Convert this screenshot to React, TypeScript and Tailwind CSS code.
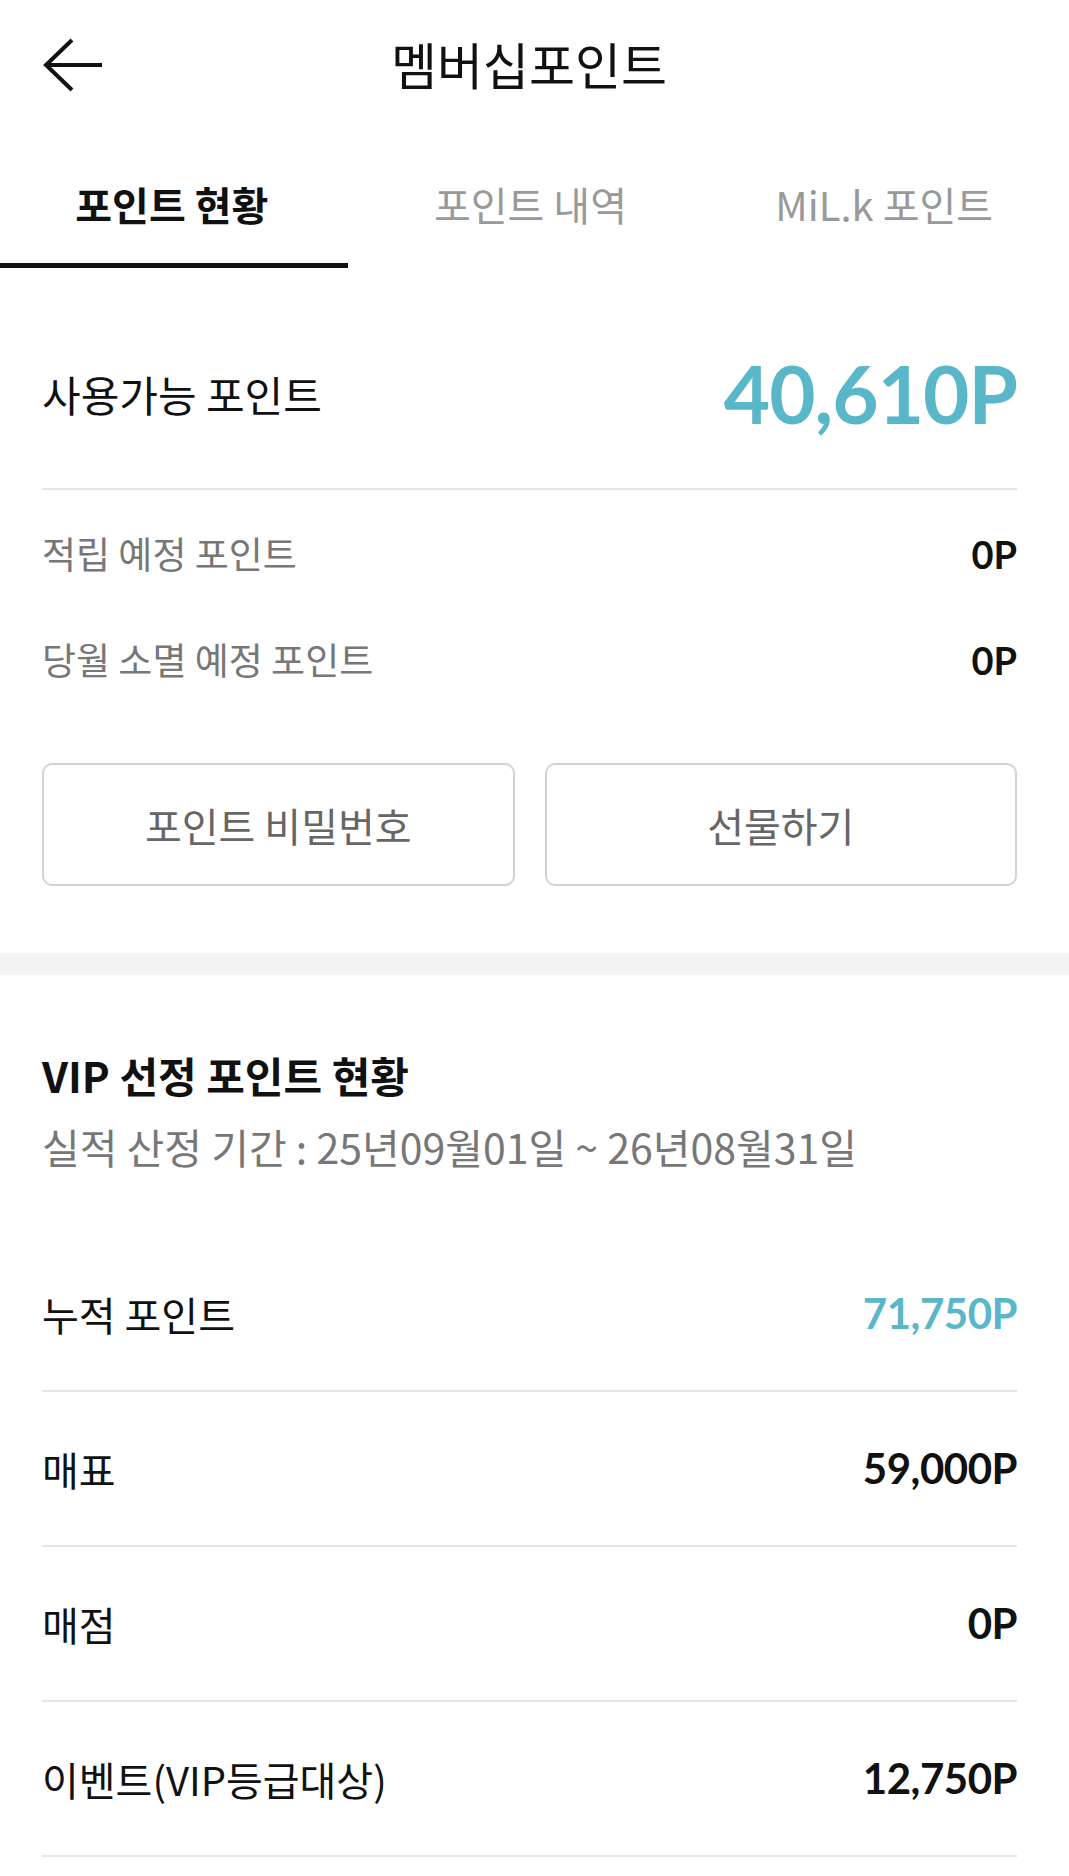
import React from "react";

const kr = "font-['Noto_Sans_CJK_KR','Noto_Sans',sans-serif]";
const num = "font-['Lato','Noto_Sans_CJK_KR',sans-serif]";

function BackArrow() {
  return (
    <svg width="62" height="56" viewBox="0 0 62 56" fill="none">
      <path
        d="M60 28H4M30 3L4 28L30 53"
        stroke="#111"
        strokeWidth="4"
        strokeLinecap="butt"
        strokeLinejoin="miter"
      />
    </svg>
  );
}

const tabs = ["포인트 현황", "포인트 내역", "MiL.k 포인트"];

const vipRows = [
  { label: "누적 포인트", value: "71,750P", accent: true },
  { label: "매표", value: "59,000P" },
  { label: "매점", value: "0P" },
  { label: "이벤트(VIP등급대상)", value: "12,750P" },
];

export default function App() {
  return (
    <div className={`min-h-screen w-[1069px] bg-white text-[#111] ${kr}`}>
      {/* header */}
      <header className="grid h-[126px] grid-cols-[1fr_auto_1fr] items-center pr-[11px]">
        <div className="pl-[42px] pt-[4px]">
          <BackArrow />
        </div>
        <h1 className="text-[50px] leading-none text-[#111]">멤버십포인트</h1>
        <div />
      </header>

      {/* tabs */}
      <nav className="grid grid-cols-3 pr-[8px]">
        {tabs.map((t, i) => (
          <div key={t} className="flex flex-col items-center pt-[56px]">
            <span
              className={
                i === 0
                  ? "h-[44px] pr-[10px] text-[40px] font-bold leading-[44px] text-[#111]"
                  : "h-[44px] text-[40px] leading-[44px] text-[#999]"
              }
            >
              {t}
            </span>
            <div
              className={
                i === 0
                  ? "mt-[37px] h-[5px] w-[348px] self-start bg-[#111]"
                  : "mt-[37px] h-[5px] w-full"
              }
            />
          </div>
        ))}
      </nav>

      {/* available points */}
      <section className="pl-[42px] pr-[52px]">
        <div className="mt-[80px] mb-[50px] flex h-[90px] items-center justify-between">
          <span className="text-[42px]">사용가능 포인트</span>
          <span className={`${num} text-[80px] font-bold leading-none tracking-[-1px] text-[#5ab7c9]`}>40,610P</span>
        </div>
        <div className="h-[2px] bg-[#e6e6e6]" />
        <div className="flex flex-col gap-[46px] pt-[34px]">
          <div className="flex h-[60px] items-center justify-between">
            <span className="text-[37px] text-[#777]">적립 예정 포인트</span>
            <span className={`${num} text-[38px] font-bold`}>0P</span>
          </div>
          <div className="flex h-[60px] items-center justify-between">
            <span className="text-[37px] text-[#777]">당월 소멸 예정 포인트</span>
            <span className={`${num} text-[38px] font-bold`}>0P</span>
          </div>
        </div>
        <div className="mt-[73px] grid grid-cols-2 gap-[30px] pb-[67px]">
          <button className="h-[123px] rounded-[10px] border-2 border-[#d3d3d3] text-[40px] text-[#666]">
            포인트 비밀번호
          </button>
          <button className="h-[123px] rounded-[10px] border-2 border-[#d3d3d3] text-[40px] text-[#666]">
            선물하기
          </button>
        </div>
      </section>

      <div className="h-[22px] bg-[#f4f4f4]" />

      {/* VIP points */}
      <section className="pl-[42px] pr-[52px] pt-[75px]">
        <h2 className="h-[50px] text-[42px] font-bold leading-[50px]">VIP 선정 포인트 현황</h2>
        <p className="mt-[23px] h-[46px] text-[41px] leading-[46px] text-[#777]">
          실적 산정 기간 : 25년09월01일 ~ 26년08월31일
        </p>
        <ul className="mt-[68px]">
          {vipRows.map((r) => (
            <li key={r.label} className="flex h-[155px] items-center justify-between border-b-2 border-[#e6e6e6]">
              <span className="text-[40px]">{r.label}</span>
              <span
                className={
                  r.accent
                    ? `${num} text-[42px] font-bold tracking-[-0.5px] text-[#5ab7c9]`
                    : `${num} text-[42px] font-bold tracking-[-0.5px] text-[#111]`
                }
              >
                {r.value}
              </span>
            </li>
          ))}
        </ul>
      </section>
    </div>
  );
}
